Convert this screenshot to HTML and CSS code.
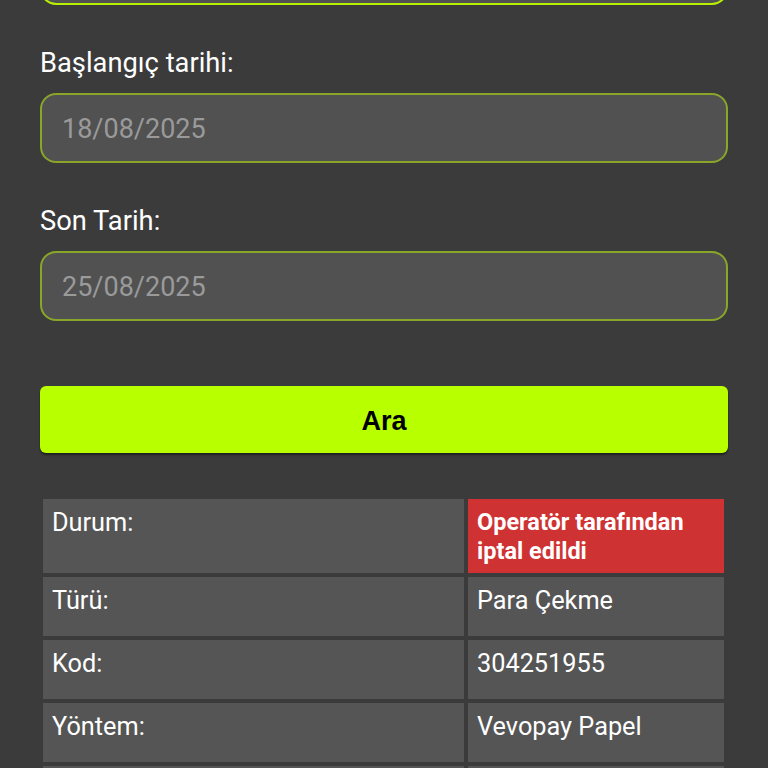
FILE: index.html
```html
<!DOCTYPE html>
<html lang="tr">
<head>
<meta charset="utf-8">
<link rel="stylesheet" href="styles.css">
</head>
<body>
<div class="page">
  <div class="field field-focused"></div>
  <label class="label">Başlangıç tarihi:</label>
  <div class="field"><span class="value">18/08/2025</span></div>
  <label class="label">Son Tarih:</label>
  <div class="field"><span class="value">25/08/2025</span></div>
  <button class="search">Ara</button>
  <div class="details">
    <div class="cell cell-key">Durum:</div>
    <div class="cell cell-status">Operatör tarafından iptal edildi</div>
    <div class="cell cell-key">Türü:</div>
    <div class="cell">Para Çekme</div>
    <div class="cell cell-key">Kod:</div>
    <div class="cell">304251955</div>
    <div class="cell cell-key">Yöntem:</div>
    <div class="cell">Vevopay Papel</div>
    <div class="cell cell-key"></div>
    <div class="cell"></div>
  </div>
</div>
</body>
</html>
```
FILE: styles.css
```css
html, body {
  margin: 0;
  padding: 0;
  background: #3b3b3b;
}
body {
  font-family: Roboto, "Noto Sans", sans-serif;
  color: #ffffff;
  overflow: hidden;
  height: 768px;
}
.page {
  padding: 0 40px;
  display: flex;
  flex-direction: column;
}
.field {
  box-sizing: border-box;
  height: 70px;
  border: 2px solid #8aa629;
  border-radius: 16px;
  background: #515151;
  display: flex;
  align-items: center;
  padding: 2px 0 0 20px;
  font-size: 27px;
  color: #9a9a9a;
}
.field-focused {
  margin-top: -65px;
  border-color: #b8f000;
}
.label {
  display: block;
  font-size: 27.3px;
  line-height: 32px;
  margin: 42px 0 14px;
  color: #ffffff;
}
.search {
  margin-top: 65px;
  height: 67px;
  border: none;
  border-radius: 6px;
  background: #b8ff00;
  box-shadow: 0 2px 2px rgba(0, 0, 0, 0.45);
  font-family: "Liberation Sans", Arial, sans-serif;
  font-weight: bold;
  font-size: 27px;
  color: #000000;
  padding: 3px 0 0;
}
.details {
  margin-top: 42px;
  display: grid;
  grid-template-columns: 421px 256px;
  grid-template-rows: 74px;
  grid-auto-rows: 59px;
  gap: 4px;
  padding: 4px 4px 4px 3px;
}
.cell {
  background: #555555;
  padding: 9px 9px 0;
  font-size: 25.3px;
  line-height: 29px;
  color: #ffffff;
}
.cell-status {
  background: #cf3232;
  font-weight: bold;
  font-size: 23.5px;
  padding-top: 9px;
}
```
